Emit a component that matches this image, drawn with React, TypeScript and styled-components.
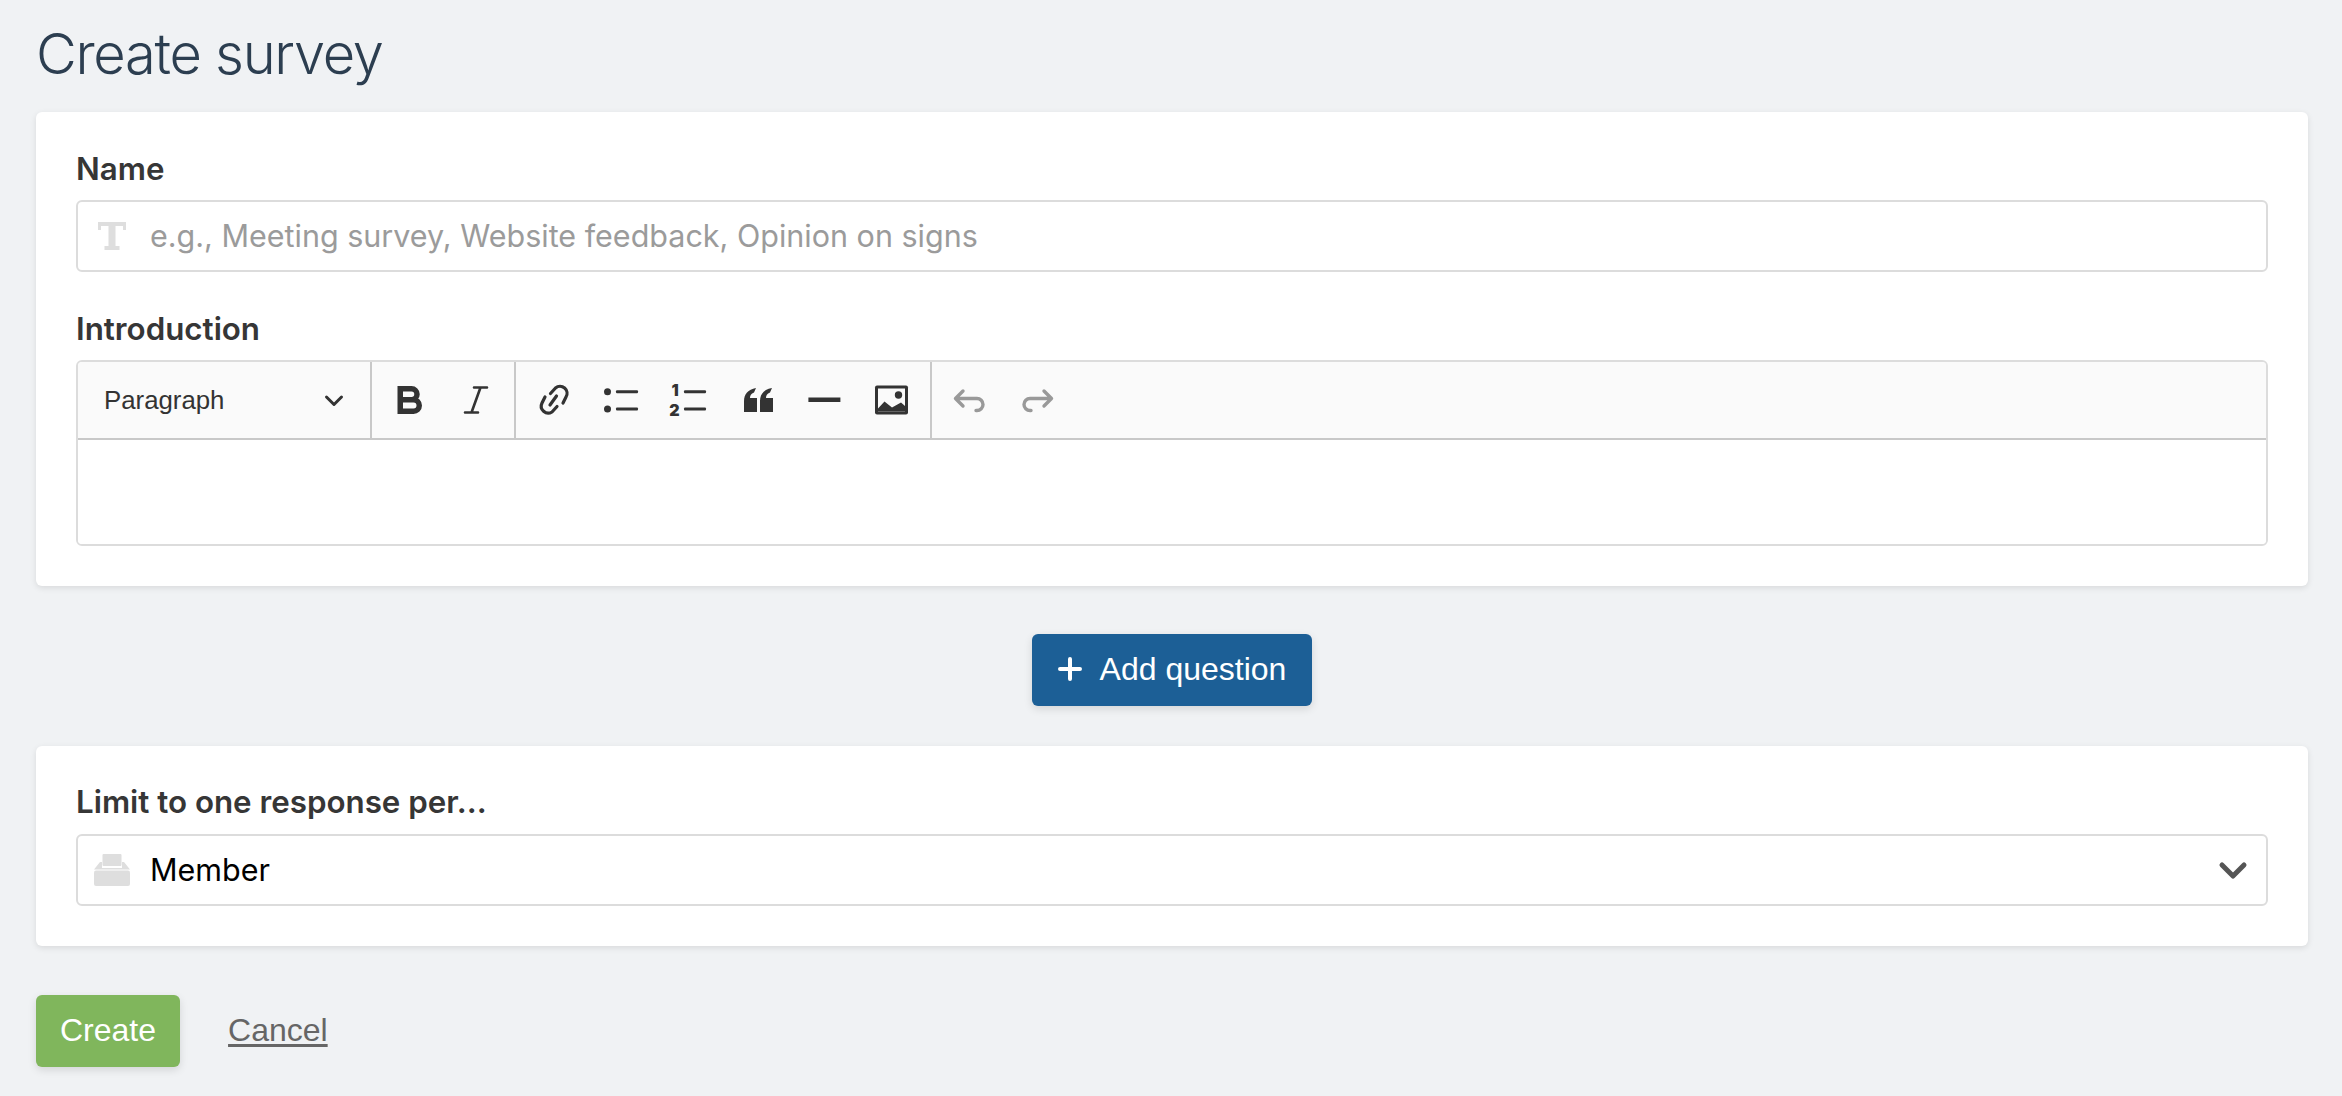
import React from "react";
import styled, { createGlobalStyle } from "styled-components";

const Global = createGlobalStyle`
  html, body { margin: 0; padding: 0; background: #f0f2f4; }
  * { box-sizing: border-box; }
  body { font-family: Inter, "Liberation Sans", sans-serif; }
`;
const Page = styled.div`
  width: 2342px; height: 1096px; padding: 0 34px 0 36px; overflow: hidden;
  display: flex; flex-direction: column;
`;
const Title = styled.h1`
  margin: 0; height: 112px; padding-top: 19px; flex: none;
  font: 300 56px/70px Inter, sans-serif; color: #2c3e50; letter-spacing: -1.3px;
`;
const Card = styled.section`
  background: #fff; border-radius: 6px; box-shadow: 0 2px 6px rgba(0,0,0,.1);
  padding: ${p => p.$pad}; flex: none;
`;
const Label = styled.label`
  display: block; font: 600 31.3px/40px Inter, sans-serif; color: #363636; margin-bottom: ${p => p.$mb}px;
`;
const Field = styled.div`
  height: 72px; border: 2px solid #dcdcdc; border-radius: 6px; background: #fff;
  display: flex; align-items: center; padding: 0 18px 0 16px; margin-bottom: ${p => p.$mb || 0}px;
`;
const FieldIcon = styled.span`
  width: 36px; height: 36px; display: flex; align-items: center; justify-content: center; margin-right: 20px; flex: none;
`;
const Placeholder = styled.span`
  font: 400 30.5px/40px Inter, sans-serif; color: #9b9b9b;
`;
const Value = styled.span`
  font: 400 30.5px/40px Inter, sans-serif; color: #000; flex: 1;
`;
const Editor = styled.div`
  border: 2px solid #dcdcdc; border-radius: 6px; overflow: hidden;
`;
const Toolbar = styled.div`
  height: 78px; background: #fafafa; border-bottom: 2px solid #c8c8c8; display: flex;
`;
const Group = styled.div`
  display: flex; align-items: center; height: 100%; padding: ${p => p.$pad}; gap: ${p => p.$gap || 0}px; width: ${p => p.$w}px;
  border-right: ${p => p.$line ? "2px solid #c8c8c8" : "none"}; flex: none;
`;
const Format = styled.div`
  flex: 1; display: flex; align-items: center; justify-content: space-between;
  font: 400 25.8px/36px "Liberation Sans", Arial, sans-serif; color: #333;
`;
const Tool = styled.span`
  width: 36px; height: 36px; display: flex; align-items: center; justify-content: center; flex: none;
  svg { overflow: visible; }
`;
const EditorBody = styled.div`
  height: 104px; background: #fff;
`;
const CenterRow = styled.div`
  display: flex; justify-content: center; padding: 48px 0 40px; flex: none;
`;
const Button = styled.button`
  height: 72px; border: 0; border-radius: 6px; background: ${p => p.$bg}; color: #fff;
  display: inline-flex; align-items: center; gap: 18px; padding: 0 ${p => p.$px}px 2px;
  font: 400 32px/40px "Liberation Sans", Arial, sans-serif; box-shadow: 0 3px 8px rgba(0,0,0,.12);
`;
const Actions = styled.div`
  display: flex; align-items: center; gap: 48px; padding-top: 49px; flex: none;
`;
const CancelLink = styled.a`
  font: 400 32px/40px "Liberation Sans", Arial, sans-serif; color: #666; text-decoration: underline; text-underline-offset: 3px;
  margin-bottom: 2px;
`;
const Digit = styled.text`
  font: 900 16px Inter, sans-serif; fill: #333; text-anchor: middle;
`;

const Stroke = ({ children, c = "#333", w = 3 }: any) => (
  <svg width="36" height="36" viewBox="0 0 36 36" fill="none" stroke={c} strokeWidth={w} strokeLinecap="round" strokeLinejoin="round">{children}</svg>
);

export default function App() {
  return (
    <Page>
      <Global />
      <Title>Create survey</Title>
      <Card $pad="37px 40px 40px">
        <Label $mb={11}>Name</Label>
        <Field $mb={37}>
          <FieldIcon>
            <svg width="30" height="30" viewBox="0 0 30 30" fill="#dedede"><path d="M1 1h28v8h-3V5H18.500v20h4v4H7.500v-4h4V5H4v4H1z" /></svg>
          </FieldIcon>
          <Placeholder>e.g., Meeting survey, Website feedback, Opinion on signs</Placeholder>
        </Field>
        <Label $mb={11}>Introduction</Label>
        <Editor>
          <Toolbar>
            <Group $line $w={294} $pad="0 24px 0 26px"><Format>Paragraph
              <svg width="24" height="24" viewBox="0 0 24 24" fill="none" stroke="#333" strokeWidth="3" strokeLinecap="round" strokeLinejoin="round"><path d="M4.500 9l7.500 7.500 7.500-7.500" /></svg>
            </Format></Group>
            <Group $line $w={144} $pad="0 0 0 19.500px" $gap={30.5}>
              <Tool><svg width="36" height="36" viewBox="0 0 36 36" fill="none" stroke="#333" strokeWidth="5.500"><path d="M8.250 6.750H19.500a5.500 5.500 0 0 1 0 11H8.250zM8.250 17.750H21.500a5.750 5.750 0 0 1 0 11.500H8.250z" /></svg></Tool>
              <Tool><Stroke w={2.6}><path d="M16 5.500h13M7 30.500h13M22.500 5.500l-9 25" /></Stroke></Tool>
            </Group>
            <Group $line $w={416} $pad="0 0 0 20px" $gap={31.4}>
              <Tool><Stroke w={3.2}><path d="M14.500 11.500L19.500 6A7 7 0 0 1 30 15L27 21M21 24.500L16 30A7 7 0 0 1 6 21L9 15M14 23L20.500 14" /></Stroke></Tool>
              <Tool><svg width="36" height="36" viewBox="0 0 36 36" fill="#333"><circle cx="4.500" cy="9.700" r="3.500" /><circle cx="4.500" cy="27" r="3.500" /><rect x="13" y="8.200" width="22" height="3" rx="1" /><rect x="13" y="25.500" width="22" height="3" rx="1" /></svg></Tool>
              <Tool><svg width="36" height="36" viewBox="0 0 36 36" fill="#333"><Digit x="4" y="14">1</Digit><Digit x="3.500" y="34">2</Digit><rect x="13" y="8.200" width="22" height="3" rx="1" /><rect x="13" y="25.500" width="22" height="3" rx="1" /></svg></Tool>
              <Tool><svg width="36" height="36" viewBox="0 0 36 36" fill="#333"><path d="M6 30V19C6 12 10 7.500 18 6L16 10.500C13 11.500 12 13.500 12 16H19V30zM22 30V19C22 12 26 7.500 34 6L32 10.500C29 11.500 28 13.500 28 16H35V30z" /></svg></Tool>
              <Tool><svg width="36" height="36" viewBox="0 0 36 36" fill="#333"><rect x="2.400" y="15.500" width="32" height="4.500" /></svg></Tool>
              <Tool><svg width="36" height="36" viewBox="0 0 36 36"><rect x="2" y="3.500" width="33" height="29" rx="2" fill="#333" /><rect x="5" y="6.500" width="27" height="23" fill="#fafafa" /><circle cx="25.500" cy="13" r="3.700" fill="#333" /><path d="M5 29.500v-3L11.500 19.500 19 25.500 28 20.500 32 24V29.500z" fill="#333" /></svg></Tool>
            </Group>
            <Group $w={160} $pad="0 0 0 20px" $gap={31}>
              <Tool><Stroke c="#999" w={3.4}><path d="M11 9L3.500 16.500 11 24M3.500 16.500H25A6 6 0 0 1 25 28.500H24" /></Stroke></Tool>
              <Tool><Stroke c="#999" w={3.4}><path d="M25 9L32.500 16.500 25 24M32.500 16.500H11A6 6 0 0 0 11 28.500H12" /></Stroke></Tool>
            </Group>
          </Toolbar>
          <EditorBody />
        </Editor>
      </Card>
      <CenterRow>
        <Button $bg="#1c5f96" $px={26}>
          <svg width="24" height="24" viewBox="0 0 24 24" fill="none" stroke="#fff" strokeWidth="4" strokeLinecap="round"><path d="M12 2v20M2 12h20" /></svg>
          Add question
        </Button>
      </CenterRow>
      <Card $pad="36px 40px 40px">
        <Label $mb={12}>Limit to one response per...</Label>
        <Field>
          <FieldIcon>
            <svg width="36" height="32" viewBox="0 0 36 32" fill="#dedede"><rect x="8.500" y="0" width="19" height="12" rx="1" /><path d="M6 8h2v6h20V8h2l6 7.500H0z" /><rect x="0" y="16.500" width="36" height="15.500" rx="2" /></svg>
          </FieldIcon>
          <Value>Member</Value>
          <svg width="30" height="20" viewBox="0 0 30 20" fill="none" stroke="#555" strokeWidth="5" strokeLinecap="round" strokeLinejoin="round"><path d="M4 5l11 11L26 5" /></svg>
        </Field>
      </Card>
      <Actions>
        <Button $bg="#80b65c" $px={24}>Create</Button>
        <CancelLink>Cancel</CancelLink>
      </Actions>
    </Page>
  );
}
